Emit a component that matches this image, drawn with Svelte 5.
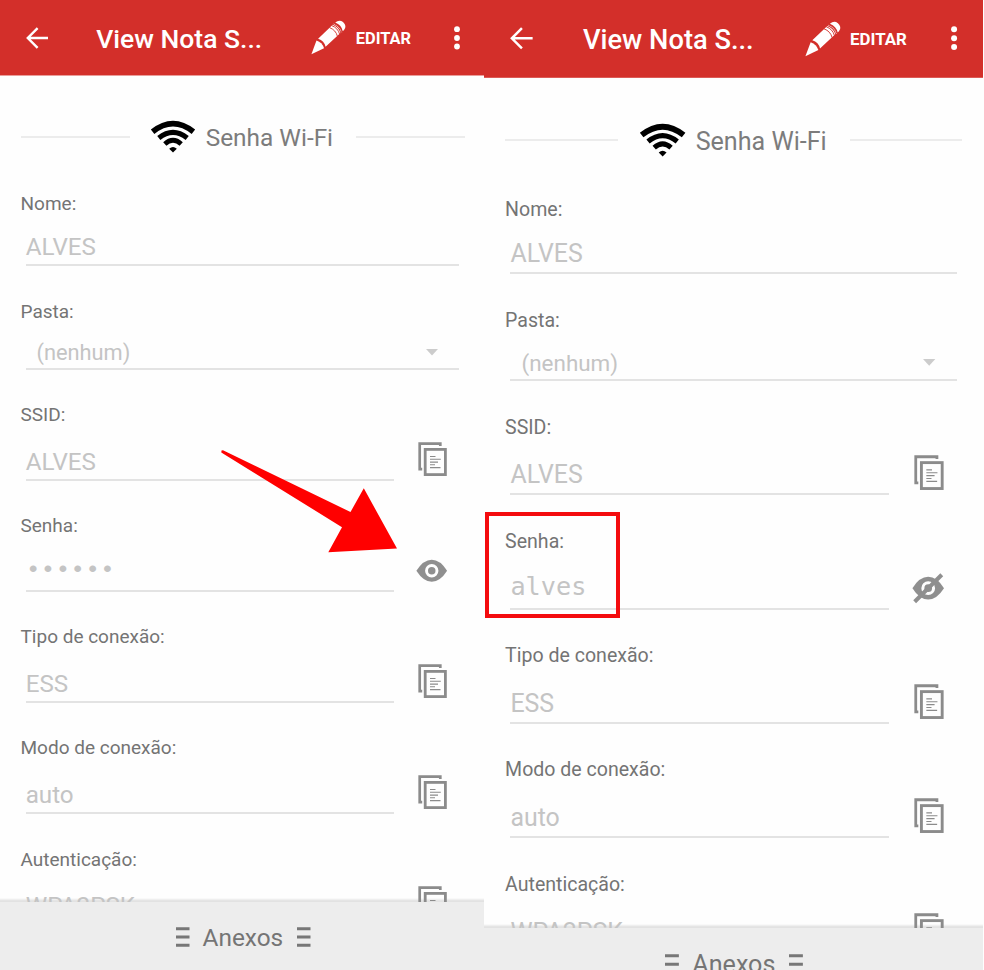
<script>
  const fields = [
    { label: 'Nome:', value: 'ALVES', kind: 'full' },
    { label: 'Pasta:', value: '(nenhum)', kind: 'select' },
    { label: 'SSID:', value: 'ALVES', kind: 'text' },
    { label: 'Senha:', kind: 'password' },
    { label: 'Tipo de conexão:', value: 'ESS', kind: 'text' },
    { label: 'Modo de conexão:', value: 'auto', kind: 'text' },
    { label: 'Autenticação:', value: 'WPA2PSK', kind: 'text' }
  ];
  const phones = [
    { side: 'left', revealed: false },
    { side: 'right', revealed: true }
  ];
</script>

{#snippet copyIcon()}
  <svg class="copy" viewBox="0 0 29 34" fill="none" stroke="#8b8b8b">
    <path d="M22.3 4V1.7H1.7V27.2H4.2" stroke-width="2.7" />
    <rect x="7.2" y="7.4" width="20.2" height="25.2" stroke-width="2.8" />
    <path d="M12 14.5h5.5M12 17.3h10.8M12 20.1h8M12 22.8h5M12 25.6h10.5" stroke-width="1.1" />
  </svg>
{/snippet}

{#snippet grip()}
  <svg class="grip" viewBox="0 0 14 20"><path d="M0 1.7h13.5M0 10h13.5M0 18.3h13.5" stroke="#777" stroke-width="3" /></svg>
{/snippet}

<main>
  {#each phones as phone}
    <section class="phone {phone.side}">
      <header>
        <svg class="back" viewBox="0 0 22 22" fill="none" stroke="#fff" stroke-width="2.4"><path d="M22 11H2M11.6 1.2L1.8 11l9.8 9.8" /></svg>
        <h1>View Nota S...</h1>
        <svg class="pencil" viewBox="0 0 35 35">
          <path d="M.4 34.3L5.5 20.6Q11.2 22.4 13 28.3Z" fill="#fff" />
          <path d="M7.1 18.7L21.7 4.8Q27.9 7.2 29.4 13L14.6 26.8Q13.3 20.5 7.1 18.7Z" fill="#fff" />
          <path d="M24.2 2.6Q28.3-.8 32 2.1Q36.3 6 33 10L31.8 11.2Q30.4 5 24.2 2.6Z" fill="#fff" />
          <path d="M22.7 4Q28.8 6.2 30.6 12.2" stroke="#fff" stroke-width="1" fill="none" />
          <path d="M18.5 7.6Q24.8 10 26.4 16.2M20.7 5.6Q26.9 7.9 28.6 14.1M22.9 3.6Q29.2 5.9 30.9 12" stroke="#d32f2a" stroke-width=".9" fill="none" />
        </svg>
        <span class="edit">EDITAR</span>
        <svg class="more" viewBox="0 0 6 24" fill="#fff"><circle cx="3" cy="3.2" r="2.9" /><circle cx="3" cy="12" r="2.9" /><circle cx="3" cy="20.5" r="2.9" /></svg>
      </header>

      <div class="content">
        <div class="heading">
          <i></i>
          <svg class="wifi" viewBox="0 0 44 32" fill="none" stroke="#000">
            <path d="M1.6 10.8Q22-5.4 42.4 10.8" stroke-width="5.6" />
            <path d="M7.8 17Q22 5.6 36.2 17" stroke-width="5" />
            <path d="M13.8 23Q22 15.6 30.2 23" stroke-width="4.8" />
            <path d="M18.2 27.7Q22 24.3 25.8 27.7L22 31.6Z" fill="#000" stroke="none" />
          </svg>
          <h2>Senha Wi-Fi</h2>
          <i></i>
        </div>

        {#each fields as field}
          <div class="field {field.kind}">
            <div class="label">{field.label}</div>
            <div class="row">
              <div class="input">
                {#if field.kind === 'password'}
                  <span class={phone.revealed ? 'mono' : 'dots'}>{phone.revealed ? 'alves' : '••••••'}</span>
                {:else}
                  <span>{field.value}</span>
                {/if}
                {#if field.kind === 'select'}
                  <svg class="caret" viewBox="0 0 12 7"><path d="M0 0h12L6 6.5z" fill="#ccc" /></svg>
                {/if}
              </div>
              {#if field.kind === 'text'}
                {@render copyIcon()}
              {:else if field.kind === 'password'}
                <svg class="eye" viewBox="0 0 32 30">
                  <path d="M.4 15Q7.5 3.8 16 3.8T31.6 15Q24.5 26.2 16 26.2T.4 15Z" fill="#8f8f8f" />
                  <circle cx="16" cy="15" r="5.3" fill="#8f8f8f" stroke="#fefefe" stroke-width="3" />
                  {#if phone.revealed}
                    <path d="M2.6 28.4L29.4 1.7" stroke="#8f8f8f" stroke-width="4" />
                  {/if}
                </svg>
              {/if}
            </div>
          </div>
        {/each}
      </div>

      <footer>
        {@render grip()}
        <span>Anexos</span>
        {@render grip()}
      </footer>

      {#if phone.revealed}
        <div class="highlight"></div>
      {:else}
        <svg class="pointer" viewBox="0 0 176 103"><path d="M.5.5L2 .3L129.5 62L142.8 38.3L176 98.5L107.3 102.3L121 77.2L.3 2.5Z" fill="#f00" /></svg>
      {/if}
    </section>
  {/each}
</main>

<style>
  :global(body) {
    margin: 0;
    background: #fefefe;
  }
  main {
    display: flex;
    height: 970px;
    overflow: hidden;
    font-family: Roboto, sans-serif;
  }
  .phone {
    --u: 1px;
    position: relative;
    flex: none;
    display: flex;
    flex-direction: column;
    width: 484px;
  }
  .phone.right {
    --u: 1.029px;
    width: 498.5px;
  }
  svg {
    display: block;
    flex: none;
    overflow: visible;
  }
  header {
    flex: none;
    box-sizing: border-box;
    display: flex;
    align-items: center;
    height: calc(var(--u) * 76);
    padding: 0 0 0 calc(var(--u) * 25.7);
    background: #d32f2a;
    border-bottom: 1px solid #ea9d9a;
    color: #fff;
  }
  .right header {
    border-bottom-color: #dc5a56;
  }
  .back {
    width: calc(var(--u) * 22);
    height: calc(var(--u) * 22);
  }
  h1 {
    width: calc(var(--u) * 215.3);
    margin: calc(var(--u) * 2) 0 0 calc(var(--u) * 48.5);
    font-size: calc(var(--u) * 26.5);
    font-weight: 500;
    white-space: nowrap;
  }
  .pencil {
    width: calc(var(--u) * 35);
    height: calc(var(--u) * 35);
  }
  .edit {
    width: calc(var(--u) * 98);
    margin: calc(var(--u) * 1.5) 0 0 calc(var(--u) * 9.3);
    font-size: calc(var(--u) * 16.4);
    font-weight: 700;
  }
  .more {
    width: calc(var(--u) * 6);
    height: calc(var(--u) * 24);
  }
  .content {
    flex: none;
    box-sizing: border-box;
    height: calc(var(--u) * 826);
    padding: calc(var(--u) * 40) 0 0 calc(var(--u) * 20.5);
    overflow: hidden;
    background: linear-gradient(#fefefe calc(100% - 4px), #e0e0e0 calc(100% - 1px), #e4e4e4);
  }
  .heading {
    display: flex;
    align-items: center;
    width: calc(var(--u) * 444.5);
    height: calc(var(--u) * 41);
    margin-bottom: calc(var(--u) * 34.5);
  }
  .right .heading {
    margin-bottom: calc(var(--u) * 35.2);
  }
  .heading i {
    flex: none;
    width: calc(var(--u) * 109.5);
    height: 2px;
    background: #ececec;
  }
  .heading i:last-child {
    margin-left: auto;
  }
  .wifi {
    width: calc(var(--u) * 44);
    height: calc(var(--u) * 32);
    margin-left: calc(var(--u) * 21.2);
  }
  h2 {
    margin: calc(var(--u) * 2) 0 0 calc(var(--u) * 10.5);
    font-size: calc(var(--u) * 24.4);
    font-weight: 400;
    color: #7c7c7c;
    white-space: nowrap;
  }
  .field {
    height: calc(var(--u) * 77.5);
    margin-bottom: calc(var(--u) * 33.6);
  }
  .field.full {
    height: calc(var(--u) * 74.5);
  }
  .field.select {
    height: calc(var(--u) * 70);
  }
  .label {
    height: calc(var(--u) * 24);
    line-height: calc(var(--u) * 24);
    font-size: calc(var(--u) * 19);
    color: #747474;
  }
  .row {
    display: flex;
    align-items: flex-end;
    height: calc(100% - var(--u) * 24);
    padding-left: calc(var(--u) * 5.2);
  }
  .input {
    box-sizing: border-box;
    display: flex;
    align-items: flex-end;
    width: calc(var(--u) * 368.3);
    height: 100%;
    padding-bottom: calc(var(--u) * 2);
    border-bottom: 2px solid #e3e3e3;
    font-size: calc(var(--u) * 24.2);
    line-height: calc(var(--u) * 30);
    color: #c4c4c4;
  }
  .full .input,
  .select .input {
    width: calc(var(--u) * 433.5);
  }
  .select .input {
    justify-content: space-between;
    padding: 0 calc(var(--u) * 21) 0 calc(var(--u) * 10.8);
    font-size: calc(var(--u) * 21.8);
  }
  .password .input {
    padding-bottom: calc(var(--u) * 4.4);
  }
  .mono {
    font-family: "DejaVu Sans Mono", monospace;
    font-size: calc(var(--u) * 24.5);
  }
  .dots {
    font-family: "Liberation Mono", monospace;
    font-size: calc(var(--u) * 24.8);
  }
  .caret {
    width: calc(var(--u) * 12);
    height: calc(var(--u) * 7);
    margin-bottom: calc(var(--u) * 12);
  }
  .copy {
    width: calc(var(--u) * 29);
    height: calc(var(--u) * 34);
    margin: 0 0 calc(var(--u) * 4.7) calc(var(--u) * 23.9);
  }
  .eye {
    width: calc(var(--u) * 31.5);
    height: calc(var(--u) * 29.5);
    margin: 0 0 calc(var(--u) * 6.2) calc(var(--u) * 21.9);
  }
  footer {
    flex: none;
    box-sizing: border-box;
    display: flex;
    align-items: center;
    height: calc(var(--u) * 70);
    padding-left: calc(var(--u) * 175.5);
    background: #ededed;
    font-size: calc(var(--u) * 24.4);
    color: #757575;
  }
  footer span {
    width: calc(var(--u) * 94);
    margin-left: calc(var(--u) * 13);
  }
  .grip {
    width: calc(var(--u) * 14);
    height: calc(var(--u) * 20);
  }
  .pointer {
    position: absolute;
    left: 221px;
    top: 450px;
    width: 176px;
    height: 103px;
  }
  .highlight {
    position: absolute;
    left: 1px;
    top: 512px;
    box-sizing: border-box;
    width: 135px;
    height: 106px;
    border: 4px solid #f40c0e;
  }
</style>
